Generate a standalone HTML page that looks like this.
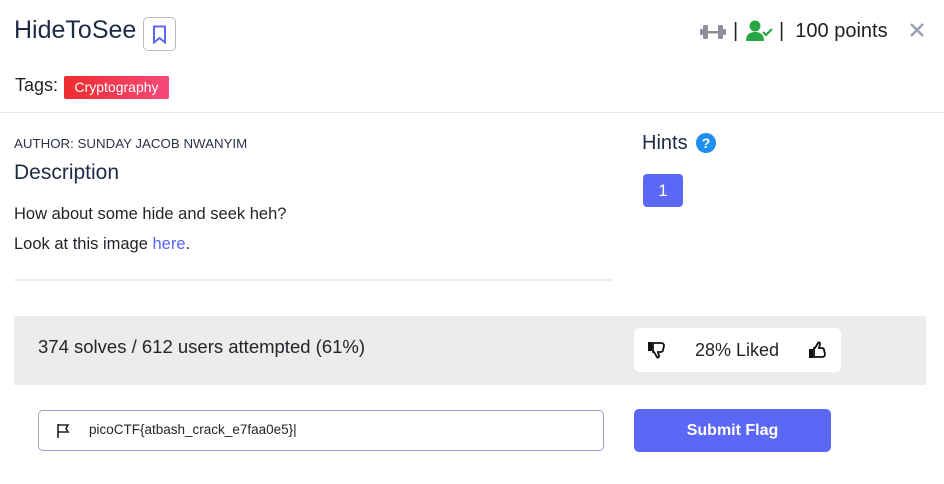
<!DOCTYPE html>
<html><head><style>
*{box-sizing:border-box;margin:0;padding:0}
body{width:944px;height:484px;background:#fff;font-family:"Liberation Sans",sans-serif;color:#212529;position:relative;overflow:hidden}
.a{position:absolute;white-space:nowrap}
</style></head><body>
<div class="a" style="left:14px;top:16px;font-size:25px;color:#1f2a44">HideToSee</div>
<div class="a" style="left:143px;top:17px;width:33px;height:34px;border:1px solid #b8bcc8;border-radius:5px"></div>
<svg class="a" style="left:152px;top:25px" width="15" height="19" viewBox="0 0 15 19"><path d="M2 1.5h11v16l-5.5-4.5-5.5 4.5z" fill="none" stroke="#5b67f5" stroke-width="2"/></svg>
<div class="a" style="left:15px;top:75px;font-size:18px;color:#212529">Tags:</div>
<div class="a" style="left:64px;top:76px;width:105px;height:23px;border-radius:2px;background:linear-gradient(90deg,#ee2d2d,#f7497a);color:#fff;font-size:14px;line-height:23px;text-align:center">Cryptography</div>
<svg class="a" style="left:700px;top:24px" width="26" height="16" viewBox="0 0 26 16"><g fill="#8d909b"><rect x="0" y="5" width="3" height="6" rx="1"/><rect x="3" y="1" width="5" height="14" rx="1.5"/><rect x="8" y="7" width="10" height="2.5"/><rect x="18" y="1" width="5" height="14" rx="1.5"/><rect x="23" y="5" width="3" height="6" rx="1"/></g></svg>
<div class="a" style="left:733px;top:20px;font-size:20px;color:#222">|</div>
<svg class="a" style="left:746px;top:20px" width="27" height="22" viewBox="0 0 27 22"><g fill="#28a745"><circle cx="9" cy="6" r="5.5"/><path d="M0 21c0-6 3-9 9-9s9 3 9 9z"/><path d="M17 12l3 3 6-6" fill="none" stroke="#28a745" stroke-width="2.2"/></g></svg>
<div class="a" style="left:779px;top:20px;font-size:20px;color:#222">|&nbsp; 100 points</div>
<svg class="a" style="left:909px;top:22px" width="16" height="16" viewBox="0 0 16 16"><path d="M2 2l12 12M14 2L2 14" stroke="#9aa0b4" stroke-width="2.6"/></svg>
<div class="a" style="left:0;top:112px;width:944px;height:1px;background:#e6e6e6"></div>
<div class="a" style="left:14px;top:136px;font-size:13.3px;color:#2b3446">AUTHOR: SUNDAY JACOB NWANYIM</div>
<div class="a" style="left:14px;top:161px;font-size:21px;color:#1f2a44">Description</div>
<div class="a" style="left:14px;top:205px;font-size:16.5px;color:#212529">How about some hide and seek heh?</div>
<div class="a" style="left:14px;top:235px;font-size:16.5px;color:#212529">Look at this image <span style="color:#5b67f5">here</span>.</div>
<div class="a" style="left:14px;top:279px;width:598px;height:2px;background:#eee"></div>
<div class="a" style="left:642px;top:132px;font-size:20px;color:#1f2a44">Hints</div>
<div class="a" style="left:696px;top:133px;width:20px;height:20px;border-radius:50%;background:#1e8ef0;color:#fff;font-size:14px;font-weight:bold;text-align:center;line-height:20px">?</div>
<div class="a" style="left:643px;top:174px;width:40px;height:33px;border-radius:4px;background:#5b67f5;color:#fff;font-size:17px;text-align:center;line-height:33px">1</div>
<div class="a" style="left:14px;top:316px;width:912px;height:69px;background:#ececec"></div>
<div class="a" style="left:38px;top:336px;font-size:18.5px;color:#212529">374 solves / 612 users attempted (61%)</div>
<div class="a" style="left:634px;top:328px;width:207px;height:44px;background:#fff;border-radius:5px"></div>
<div class="a" style="left:695px;top:340px;font-size:18px;color:#212529">28% Liked</div>
<svg class="a" style="left:647px;top:340px" width="20" height="20" viewBox="0 0 20 20"><rect x="1" y="2" width="4" height="9" fill="#111"/><path d="M6 3h8c2 0 3 1 3 3l-1 4c0 2-2 2-3 2h-2l1 4c0 2-2 2-2 1l-3-5H6z" fill="none" stroke="#111" stroke-width="1.8"/></svg>
<svg class="a" style="left:808px;top:340px" width="20" height="20" viewBox="0 0 20 20"><rect x="1" y="9" width="4" height="9" fill="#111"/><path d="M6 17h8c2 0 3-1 3-3l-1-4c0-2-2-2-3-2h-2l1-4c0-2-2-2-2-1L7 8H6z" fill="none" stroke="#111" stroke-width="1.8"/></svg>
<div class="a" style="left:38px;top:410px;width:566px;height:41px;border:1px solid #9aa0d8;border-left-color:#aaa;border-radius:5px"></div>
<svg class="a" style="left:56px;top:423px" width="15" height="15" viewBox="0 0 15 15"><path d="M2 1v14M2 2h10l-2 3.5 2 3.5H2" fill="none" stroke="#222" stroke-width="1.6"/></svg>
<div class="a" style="left:89px;top:422px;font-size:13.5px;color:#212529">picoCTF{atbash_crack_e7faa0e5}|</div>
<div class="a" style="left:634px;top:409px;width:197px;height:43px;border-radius:5px;background:#5b67f5;color:#fff;font-size:16px;font-weight:bold;text-align:center;line-height:43px">Submit Flag</div>
</body></html>
